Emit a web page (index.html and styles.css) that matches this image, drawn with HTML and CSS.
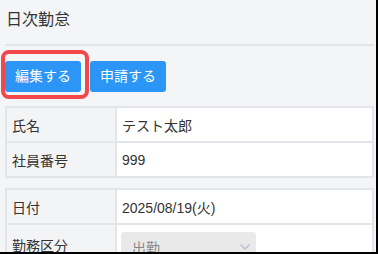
FILE: index.html
```html
<!DOCTYPE html>
<html lang="ja">
<head>
<meta charset="utf-8">
<link rel="stylesheet" href="styles.css">
</head>
<body>
<div class="frame">
  <div class="page">
    <h1 class="title">日次勤怠</h1>
    <div class="actions">
      <button class="btn">編集する</button>
      <button class="btn">申請する</button>
    </div>
    <table class="info">
      <tr><th>氏名</th><td>テスト太郎</td></tr>
      <tr><th>社員番号</th><td>999</td></tr>
    </table>
    <table class="info second">
      <tr><th>日付</th><td>2025/08/19(火)</td></tr>
      <tr class="tall"><th>勤務区分</th><td>
        <div class="select"><span>出勤</span>
          <svg class="chev" width="10" height="6" viewBox="0 0 10 6"><path d="M1 1l4 4 4-4" fill="none" stroke="#b7c2ce" stroke-width="1.6" stroke-linecap="round" stroke-linejoin="round"/></svg>
        </div>
      </td></tr>
    </table>
  </div>
  <div class="ring"></div>
</div>
</body>
</html>
```

FILE: styles.css
```css
html, body {
  margin: 0;
  padding: 0;
  background: #000;
}
.frame {
  position: relative;
  width: 376px;
  height: 252px;
  overflow: hidden;
  background: #f4f5f7;
  font-family: "Liberation Sans", "Noto Sans CJK JP", sans-serif;
  color: #333;
}
.page {
  padding: 0 2px 0 5px;
}
.title {
  margin: 0;
  padding: 12px 1px 0;
  height: 32px;
  font-size: 16px;
  line-height: 16px;
  font-weight: normal;
  color: #333;
  border-bottom: 2px solid #e3e4e7;
}
.actions {
  display: flex;
  gap: 9px;
  margin-top: 15px;
}
.btn {
  height: 31px;
  padding: 0 10px;
  width: 76px;
  border: none;
  border-radius: 3px;
  background: #2b96f5;
  color: #fff;
  font-family: inherit;
  font-size: 14px;
  line-height: 31px;
}
.info {
  width: 369px;
  margin-top: 14px;
  border-collapse: separate;
  border-spacing: 0;
  border-top: 2px solid #e2e5e9;
  border-left: 2px solid #e2e5e9;
  font-size: 14px;
}
.info.second {
  margin-top: 10px;
}
.info th, .info td {
  height: 33px;
  padding: 0 5px;
  border-right: 2px solid #e2e5e9;
  border-bottom: 2px solid #e2e5e9;
  text-align: left;
  font-weight: normal;
  color: #333;
}
.info th {
  width: 98px;
  background: #f3f4f6;
}
.info td {
  background: #fff;
}
.info tr.tall td {
  height: 40px;
  padding: 0 4px;
  vertical-align: top;
}
.info tr.tall th {
  height: 40px;
}
.select {
  margin-top: 7px;
  width: 135px;
  height: 30px;
  border-radius: 4px;
  background: #e9e9ea;
  display: flex;
  align-items: center;
  justify-content: space-between;
  padding: 0 6px 0 11px;
  box-sizing: border-box;
  color: #888;
}
.ring {
  position: absolute;
  left: 1px;
  top: 50px;
  width: 80px;
  height: 41px;
  border: 4px solid #f2474b;
  border-radius: 8px;
}
```
